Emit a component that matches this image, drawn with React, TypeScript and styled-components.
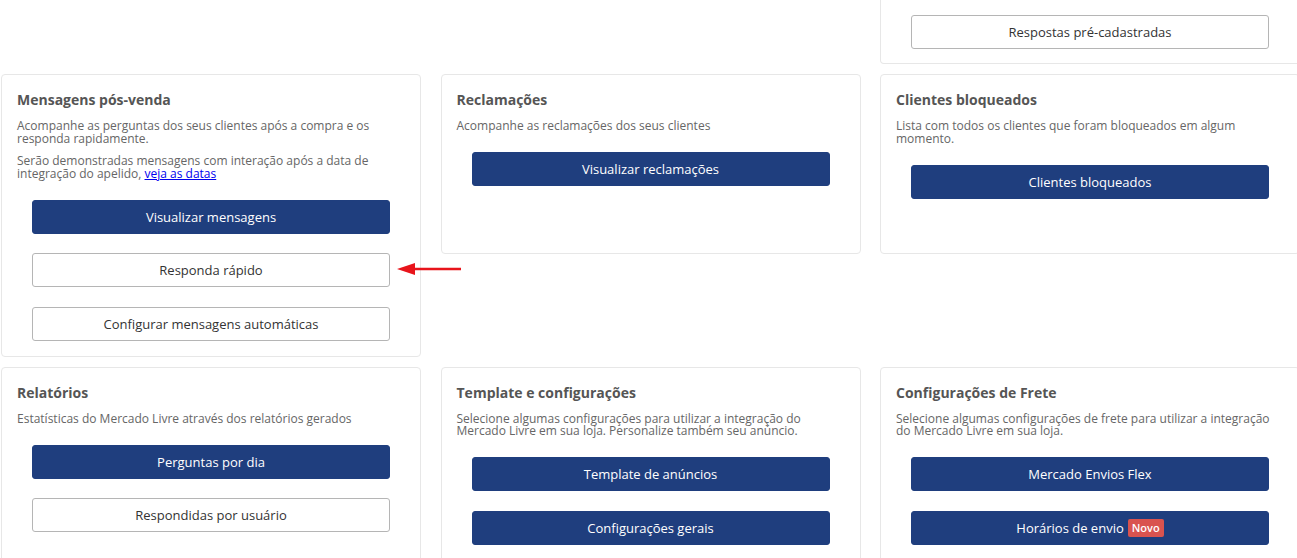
import React from "react";
import styled, {createGlobalStyle} from "styled-components";

const GlobalStyle = createGlobalStyle`
    html, body {
        margin: 0;
        padding: 0;
        background: #fff;
        overflow: hidden;
    }
    body {
        font-family: "Open Sans", "Liberation Sans", sans-serif;
    }
`

const PAGE = styled.div`
    position: relative;
    display: grid;
    grid-template-columns: repeat(3, 420px);
    column-gap: 19.5px;
    row-gap: 10px;
    align-items: start;
    padding-left: 1px;
    width: 1320px;
`

const CARD = styled.section<{ $minHeight?: number; $tail?: boolean }>`
    box-sizing: border-box;
    min-height: ${props => props.$minHeight ? props.$minHeight + 'px' : 'auto'};
    padding: ${props => props.$tail ? '15px 15px 14px' : '15px 15px 15px'};
    border: 1px solid #e7e7e7;
    border-top: ${props => props.$tail ? 'none' : '1px solid #e7e7e7'};
    border-radius: ${props => props.$tail ? '0 0 4px 4px' : '4px'};
    background: #fff;
`

const EMPTY = styled.div``

const TITLE = styled.h3`
    margin: 0 0 10px;
    font-size: 14px;
    line-height: 20px;
    font-weight: 700;
    color: #555;
`

const DESC = styled.p`
    margin: 0 0 10px;
    font-size: 12px;
    line-height: 12.5px;
    color: #666;

    a {
        color: #0000ee;
        text-decoration: underline;
    }
`

const STACK = styled.div<{ $top?: boolean }>`
    display: flex;
    flex-direction: column;
    gap: 19.5px;
    padding: ${props => props.$top ? '0' : '9.5px'} 15px 0;
`

const BUTTON = styled.button<{ $outline?: boolean }>`
    box-sizing: border-box;
    height: 34px;
    display: flex;
    align-items: center;
    justify-content: center;
    gap: 4px;
    font-family: "Open Sans", "Liberation Sans", sans-serif;
    font-size: 13px;
    border-radius: 3px;
    cursor: pointer;
    color: ${props => props.$outline ? '#333' : '#fff'};
    background: ${props => props.$outline ? '#fff' : '#1f3e7e'};
    border: 1px solid ${props => props.$outline ? '#b5b5b5' : '#1f3e7e'};
`

const BADGE = styled.span`
    display: inline-block;
    padding: 2px 4px;
    font-size: 11px;
    line-height: 14px;
    font-weight: 600;
    color: #fff;
    background: #d9534f;
    border-radius: 2px;
`

const ARROW = styled.svg`
    position: absolute;
    left: 396px;
    top: 261px;
`

type Btn = { label: string; outline?: boolean; badge?: string }

const Card = ({title, children, buttons, minHeight}: {
    title: string; children: React.ReactNode; buttons: Btn[]; minHeight?: number
}) => (
    <CARD $minHeight={minHeight}>
        <TITLE>{title}</TITLE>
        {children}
        <STACK>
            {buttons.map(b => (
                <BUTTON key={b.label} $outline={b.outline}>
                    {b.label}{b.badge && <BADGE>{b.badge}</BADGE>}
                </BUTTON>
            ))}
        </STACK>
    </CARD>
)

const App = () => {
    return (
        <PAGE>
            <GlobalStyle/>
            <EMPTY/>
            <EMPTY/>
            <CARD $tail>
                <STACK $top>
                    <BUTTON $outline>Respostas pré-cadastradas</BUTTON>
                </STACK>
            </CARD>

            <Card title="Mensagens pós-venda" buttons={[
                {label: "Visualizar mensagens"},
                {label: "Responda rápido", outline: true},
                {label: "Configurar mensagens automáticas", outline: true},
            ]}>
                <DESC>Acompanhe as perguntas dos seus clientes após a compra e os responda rapidamente.</DESC>
                <DESC>Serão demonstradas mensagens com interação após a data de integração do apelido, <a href="#">veja as datas</a></DESC>
            </Card>
            <Card title="Reclamações" minHeight={180} buttons={[{label: "Visualizar reclamações"}]}>
                <DESC>Acompanhe as reclamações dos seus clientes</DESC>
            </Card>
            <Card title="Clientes bloqueados" minHeight={180} buttons={[{label: "Clientes bloqueados"}]}>
                <DESC>Lista com todos os clientes que foram bloqueados em algum momento.</DESC>
            </Card>

            <Card title="Relatórios" minHeight={200} buttons={[
                {label: "Perguntas por dia"},
                {label: "Respondidas por usuário", outline: true},
            ]}>
                <DESC>Estatísticas do Mercado Livre através dos relatórios gerados</DESC>
            </Card>
            <Card title="Template e configurações" minHeight={200} buttons={[
                {label: "Template de anúncios"},
                {label: "Configurações gerais"},
            ]}>
                <DESC>Selecione algumas configurações para utilizar a integração do Mercado Livre em sua loja. Personalize também seu anúncio.</DESC>
            </Card>
            <Card title="Configurações de Frete" minHeight={200} buttons={[
                {label: "Mercado Envios Flex"},
                {label: "Horários de envio", badge: "Novo"},
            ]}>
                <DESC>Selecione algumas configurações de frete para utilizar a integração do Mercado Livre em sua loja.</DESC>
            </Card>

            <ARROW width="68" height="16" viewBox="0 0 68 16">
                <line x1="16" y1="8" x2="65" y2="8" stroke="#e8141b" strokeWidth="2.5"/>
                <polygon points="1,8 19,2 19,14" fill="#e8141b"/>
            </ARROW>
        </PAGE>
    )
}

export default App;
